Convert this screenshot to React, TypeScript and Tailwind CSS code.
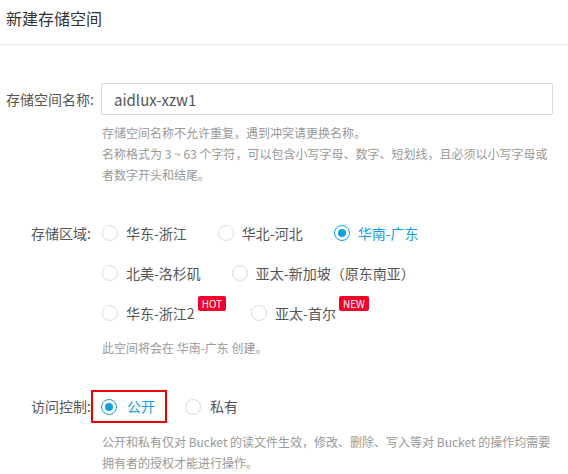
import React from "react";

const regionRows = [
  [
    { label: "华东-浙江" },
    { label: "华北-河北" },
    { label: "华南-广东", checked: true },
  ],
  [{ label: "北美-洛杉矶" }, { label: "亚太-新加坡（原东南亚）" }],
  [
    { label: "华东-浙江2", badge: "HOT" },
    { label: "亚太-首尔", badge: "NEW" },
  ],
];

const Radio = ({ checked }: { checked?: boolean }) => (
  <span
    className={
      checked
        ? "flex h-[16px] w-[16px] shrink-0 items-center justify-center rounded-full border border-[#0ea0e4] bg-white"
        : "flex h-[16px] w-[16px] shrink-0 items-center justify-center rounded-full border border-[#dcdcdc] bg-white"
    }
  >
    {checked && <span className="h-[8px] w-[8px] rounded-full bg-[#0ea0e4]"></span>}
  </span>
);

const App = () => {
  return (
    <div className="h-[474px] w-[568px] overflow-hidden bg-white font-['Noto_Sans_CJK_SC',sans-serif] text-[#555]">
      <div className="h-[45px] border-b border-[#e8e8e8] px-[6px] pt-[8px]">
        <h1 className="text-[16px] leading-[20px] text-[#333]">新建存储空间</h1>
      </div>

      {/* bucket name */}
      <div className="mt-[38px] flex items-center">
        <label className="w-[94px] shrink-0 text-right text-[14px] text-[#555]">存储空间名称:</label>
        <input
          readOnly
          value="aidlux-xzw1"
          className="ml-[7px] h-[32px] w-[452px] rounded-[2px] border border-[#d9d9d9] px-[12px] text-[15px] text-[#555] outline-none"
        />
      </div>
      <div className="ml-[102px] mt-[7px] w-[456px] text-[12px] leading-[21px] text-[#999]">
        <p>存储空间名称不允许重复，遇到冲突请更换名称。</p>
        <p>名称格式为 3 ~ 63 个字符，可以包含小写字母、数字、短划线，且必须以小写字母或者数字开头和结尾。</p>
      </div>

      {/* region */}
      <div className="mt-[28px] flex">
        <label className="h-[40px] w-[94px] shrink-0 pr-[3px] text-right text-[14px] leading-[40px]">存储区域:</label>
        <div className="ml-[8px]">
          {regionRows.map((row, i) => (
            <div key={i} className="flex h-[40px] items-center gap-[31px]">
              {row.map((item: { label: string; checked?: boolean; badge?: string }) => (
                <div key={item.label} className="flex h-full items-center">
                  <Radio checked={item.checked} />
                  <span
                    className={
                      item.checked
                        ? "ml-[8px] text-[14px] text-[#0ea0e4]"
                        : "ml-[8px] text-[14px] text-[#555]"
                    }
                  >
                    {item.label}
                  </span>
                  {item.badge && (
                    <span className="-mr-[6px] ml-[3px] mt-[3px] self-start rounded-[2px] bg-[#f5002a] px-[4px] text-[10px] leading-[15px] text-white">
                      {item.badge}
                    </span>
                  )}
                </div>
              ))}
            </div>
          ))}
          <p className="mt-[4px] text-[12px] leading-[21px] text-[#999]">此空间将会在 华南-广东 创建。</p>
        </div>
      </div>

      {/* access */}
      <div className="relative mt-[32px] flex h-[33px] items-center">
        <label className="w-[94px] shrink-0 pr-[3px] text-right text-[14px]">访问控制:</label>
        <div className="ml-[7px] flex items-center">
          <Radio checked />
          <span className="ml-[10px] text-[14px] text-[#0ea0e4]">公开</span>
          <span className="ml-[30px]">
            <Radio />
          </span>
          <span className="ml-[9px] text-[14px]">私有</span>
        </div>
        <div className="absolute left-[91px] top-0 h-[33px] w-[76px] border-2 border-[#f00000]"></div>
      </div>
      <div className="ml-[102px] mt-[8px] w-[456px] text-[12px] leading-[21px] text-[#999]">
        <p>公开和私有仅对 Bucket 的读文件生效，修改、删除、写入等对 Bucket 的操作均需要拥有者的授权才能进行操作。</p>
      </div>
    </div>
  );
};

export default App;
